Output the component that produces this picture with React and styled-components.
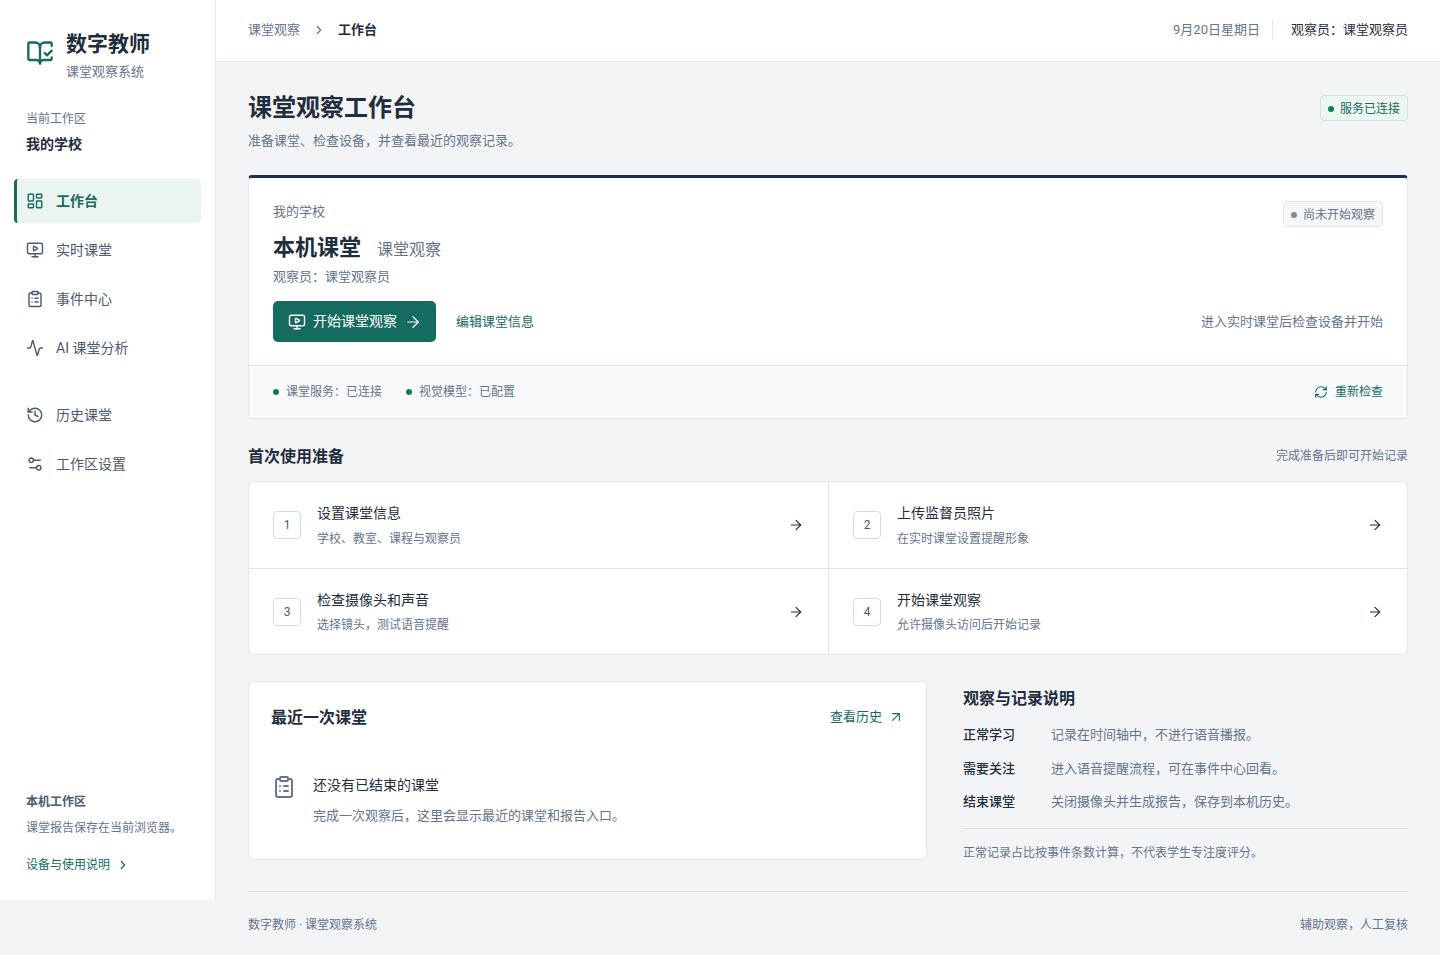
import React from "react";
import styled, { createGlobalStyle } from "styled-components";
import {
  Activity,
  ArrowRight,
  ArrowUpRight,
  BookOpenCheck,
  ChevronRight,
  ClipboardList,
  History,
  LayoutDashboard,
  MonitorPlay,
  RefreshCw,
  Settings2,
} from "lucide-react";

const GlobalStyle = createGlobalStyle`
  * { box-sizing: border-box; }
  body {
    margin: 0;
    background: #f3f4f6;
    color: #1f2d3d;
    font-family: Roboto, "Noto Sans CJK SC", sans-serif;
    line-height: 1.5;
  }
`;

const Shell = styled.div`
  display: flex;
  align-items: flex-start;
  min-height: 955px;
`;

const Sidebar = styled.aside`
  width: 216px;
  height: 900px;
  flex-shrink: 0;
  display: flex;
  flex-direction: column;
  background: #fff;
  border-right: 1px solid #e2e5ea;
`;

const Brand = styled.div`
  display: flex;
  align-items: center;
  gap: 12px;
  padding: 29px 0 0 26px;
  color: #156b5f;
`;

const BrandLogo = styled(BookOpenCheck)`
  margin-top: -5px;
`;

const BrandName = styled.div`
  font-size: 21px;
  line-height: 30px;
  font-weight: 700;
  color: #1f2d3d;
`;

const BrandSub = styled.div`
  font-size: 13px;
  line-height: 18px;
  margin-top: 4px;
  color: #64748b;
`;

const Workspace = styled.div`
  padding: 29px 0 0 26px;
`;

const WorkspaceLabel = styled.div`
  font-size: 12px;
  line-height: 18px;
  color: #64748b;
`;

const WorkspaceName = styled.div`
  font-size: 14px;
  line-height: 20px;
  margin-top: 6px;
  font-weight: 700;
  color: #1f2d3d;
`;

const Nav = styled.nav`
  display: flex;
  flex-direction: column;
  gap: 5px;
  padding: 25px 14px 0;
`;

const NavItem = styled.a`
  display: flex;
  align-items: center;
  gap: 12px;
  height: 44px;
  padding-left: ${(p) => (p.$active ? "9px" : "12px")};
  margin-top: ${(p) => (p.$gapTop ? "18px" : "0")};
  font-size: 14px;
  font-weight: ${(p) => (p.$active ? 600 : 400)};
  color: ${(p) => (p.$active ? "#156b5f" : "#4b5a6e")};
  background: ${(p) => (p.$active ? "#ecf4f2" : "transparent")};
  border-left: ${(p) => (p.$active ? "3px solid #156b5f" : "0")};
  border-radius: 4px;
`;

const SideFoot = styled.div`
  margin-top: auto;
  padding: 0 0 26px 26px;
`;

const SideFootTitle = styled.div`
  font-size: 12px;
  line-height: 18px;
  font-weight: 600;
  color: #4b5a6e;
`;

const SideFootText = styled.div`
  font-size: 12px;
  line-height: 18px;
  margin-top: 8px;
  color: #64748b;
`;

const SideFootLink = styled.a`
  display: flex;
  align-items: center;
  gap: 6px;
  margin-top: 19px;
  font-size: 12px;
  line-height: 18px;
  color: #156b5f;
`;

const Main = styled.div`
  flex: 1;
  min-width: 0;
`;

const TopBar = styled.header`
  height: 62px;
  display: flex;
  align-items: center;
  justify-content: space-between;
  padding: 0 32px 2px;
  background: #fff;
  border-bottom: 1px solid #e2e5ea;
`;

const Crumbs = styled.div`
  display: flex;
  align-items: center;
  gap: 12px;
  font-size: 13px;
  color: #64748b;
  strong {
    font-weight: 600;
    color: #1f2d3d;
  }
`;

const TopMeta = styled.div`
  display: flex;
  align-items: center;
  font-size: 13px;
`;

const TopDate = styled.span`
  color: #64748b;
  padding-right: 12px;
  border-right: 1px solid #e2e5ea;
  line-height: 20px;
`;

const TopUser = styled.span`
  color: #1f2d3d;
  padding-left: 18px;
`;

const Content = styled.main`
  padding: 0 32px;
`;

const PageHead = styled.div`
  display: flex;
  justify-content: space-between;
  align-items: flex-start;
  padding-top: 29px;
`;

const PageTitle = styled.h1`
  margin: 0;
  font-size: 24px;
  line-height: 34px;
  font-weight: 700;
  color: #1f2d3d;
`;

const PageSub = styled.p`
  margin: 6px 0 0;
  font-size: 13px;
  line-height: 20px;
  color: #64748b;
`;

const Badge = styled.span`
  display: inline-flex;
  align-items: center;
  gap: 6px;
  height: 26px;
  padding: 2px 7px 0;
  font-size: 12px;
  border-radius: 4px;
  border: 1px solid ${(p) => (p.$tone === "ok" ? "#d3e6de" : "#e2e5ea")};
  background: ${(p) => (p.$tone === "ok" ? "#eef6f2" : "#f6f7f9")};
  color: ${(p) => (p.$tone === "ok" ? "#156b5f" : "#64748b")};
`;

const ServiceBadge = styled(Badge)`
  margin-top: 4px;
`;

const Dot = styled.i`
  width: 6px;
  height: 6px;
  flex-shrink: 0;
  border-radius: 50%;
  background: ${(p) => (p.$tone === "ok" ? "#14795f" : "#7d8899")};
`;

const HeroCard = styled.section`
  margin-top: 24px;
  background: #fff;
  border: 1px solid #e2e5ea;
  border-top: 3px solid #1f2f46;
  border-radius: 4px;
`;

const HeroBody = styled.div`
  position: relative;
  padding: 24px 24px 23px;
`;

const HeroBadge = styled(Badge)`
  position: absolute;
  top: 23px;
  right: 24px;
`;

const HeroSchool = styled.div`
  font-size: 13px;
  line-height: 20px;
  color: #64748b;
`;

const HeroTitleRow = styled.div`
  display: flex;
  align-items: baseline;
  gap: 16px;
  margin-top: 11px;
`;

const HeroTitle = styled.h2`
  margin: 0;
  font-size: 22px;
  line-height: 30px;
  font-weight: 700;
`;

const HeroSubtitle = styled.span`
  font-size: 16px;
  color: #64748b;
`;

const HeroObserver = styled.div`
  font-size: 13px;
  line-height: 20px;
  margin-top: 4px;
  color: #64748b;
`;

const HeroActions = styled.div`
  display: flex;
  align-items: center;
  margin-top: 14px;
`;

const StartButton = styled.button`
  display: flex;
  align-items: center;
  gap: 7px;
  height: 41px;
  padding: 0 14px 0 15px;
  border: 0;
  border-radius: 5px;
  background: #156b5f;
  color: #fff;
  font: inherit;
  font-size: 14px;
`;

const EditLink = styled.a`
  margin-left: 20px;
  font-size: 13px;
  color: #156b5f;
`;

const HeroHint = styled.span`
  margin-left: auto;
  font-size: 13px;
  color: #64748b;
`;

const StatusBar = styled.div`
  display: flex;
  align-items: center;
  gap: 24px;
  height: 53px;
  padding: 0 24px;
  background: #f9fafc;
  border-top: 1px solid #e2e5ea;
  font-size: 12px;
  color: #64748b;
`;

const StatusItem = styled.span`
  display: flex;
  align-items: center;
  gap: 7px;
`;

const RecheckLink = styled.a`
  display: flex;
  align-items: center;
  gap: 7px;
  margin-left: auto;
  color: #156b5f;
`;

const SectionHead = styled.div`
  display: flex;
  align-items: center;
  justify-content: space-between;
  margin-top: 26px;
`;

const SectionTitle = styled.h3`
  margin: 0;
  font-size: 16px;
  line-height: 24px;
  font-weight: 600;
  color: #1f2d3d;
`;

const SectionNote = styled.span`
  padding-bottom: 2px;
  font-size: 12px;
  color: #64748b;
`;

const StepGrid = styled.div`
  display: grid;
  grid-template-columns: 1fr 1fr;
  margin-top: 12px;
  background: #fff;
  border: 1px solid #e2e5ea;
  border-radius: 6px;
`;

const Step = styled.a`
  display: flex;
  align-items: center;
  gap: 16px;
  height: ${(p) => (p.$row === 0 ? "87px" : "85px")};
  padding: 0 24px;
  border-left: ${(p) => (p.$col === 1 ? "1px solid #e2e5ea" : "0")};
  border-bottom: ${(p) => (p.$row === 0 ? "1px solid #e2e5ea" : "0")};
`;

const StepNum = styled.span`
  display: flex;
  align-items: center;
  justify-content: center;
  width: 28px;
  height: 28px;
  flex-shrink: 0;
  border: 1px solid #d5d9e0;
  border-radius: 4px;
  font-size: 12px;
  color: #4b5a6e;
`;

const StepText = styled.div`
  flex: 1;
`;

const StepTitle = styled.div`
  font-size: 14px;
  line-height: 20px;
  color: #1f2d3d;
`;

const StepDesc = styled.div`
  font-size: 12px;
  line-height: 18px;
  margin-top: ${(p) => (p.$row === 0 ? "7px" : "6px")};
  color: #64748b;
`;

const Lower = styled.div`
  display: grid;
  grid-template-columns: minmax(0, 1fr) 445px;
  gap: 36px;
  margin-top: 26px;
`;

const RecentCard = styled.section`
  height: 179px;
  padding: 24px 22px;
  background: #fff;
  border: 1px solid #e2e5ea;
  border-radius: 6px;
`;

const RecentHead = styled.div`
  display: flex;
  align-items: center;
  justify-content: space-between;
`;

const HistoryLink = styled.a`
  display: flex;
  align-items: center;
  gap: 6px;
  padding-bottom: 2px;
  font-size: 13px;
  color: #156b5f;
`;

const Empty = styled.div`
  display: flex;
  gap: 17px;
  margin: 45px 0 0 1px;
  color: #64748b;
`;

const EmptyTitle = styled.div`
  font-size: 14px;
  line-height: 20px;
  color: #1f2d3d;
`;

const EmptyText = styled.div`
  font-size: 13px;
  line-height: 20px;
  margin-top: 11px;
  color: #64748b;
`;

const Notes = styled.section`
  padding-top: 6px;
`;

const NoteRow = styled.div`
  display: grid;
  grid-template-columns: 88px 1fr;
  margin-top: ${(p) => (p.$first ? "14px" : "13.5px")};
  font-size: 13px;
  line-height: 20px;
  color: #64748b;
  b {
    font-weight: 500;
    color: #1f2d3d;
  }
`;

const NoteFoot = styled.p`
  margin: 16px 0 0;
  padding-top: 14px;
  border-top: 1px solid #e2e5ea;
  font-size: 12px;
  line-height: 20px;
  color: #64748b;
`;

const Footer = styled.footer`
  display: flex;
  justify-content: space-between;
  align-items: center;
  height: 66px;
  margin-top: 28px;
  border-top: 1px solid #e2e5ea;
  font-size: 12px;
  color: #64748b;
`;

const navTop = [
  { label: "工作台", icon: LayoutDashboard, active: true },
  { label: "实时课堂", icon: MonitorPlay },
  { label: "事件中心", icon: ClipboardList },
  { label: "AI 课堂分析", icon: Activity },
];

const navBottom = [
  { label: "历史课堂", icon: History },
  { label: "工作区设置", icon: Settings2 },
];

const steps = [
  { title: "设置课堂信息", desc: "学校、教室、课程与观察员" },
  { title: "上传监督员照片", desc: "在实时课堂设置提醒形象" },
  { title: "检查摄像头和声音", desc: "选择镜头，测试语音提醒" },
  { title: "开始课堂观察", desc: "允许摄像头访问后开始记录" },
];

const notes = [
  { label: "正常学习", text: "记录在时间轴中，不进行语音播报。" },
  { label: "需要关注", text: "进入语音提醒流程，可在事件中心回看。" },
  { label: "结束课堂", text: "关闭摄像头并生成报告，保存到本机历史。" },
];

export default function App() {
  return (
    <>
      <GlobalStyle />
      <Shell>
        <Sidebar>
          <Brand>
            <BrandLogo size={28} strokeWidth={2} />
            <div>
              <BrandName>数字教师</BrandName>
              <BrandSub>课堂观察系统</BrandSub>
            </div>
          </Brand>
          <Workspace>
            <WorkspaceLabel>当前工作区</WorkspaceLabel>
            <WorkspaceName>我的学校</WorkspaceName>
          </Workspace>
          <Nav>
            {navTop.map(({ label, icon: Icon, active }) => (
              <NavItem key={label} $active={active}>
                <Icon size={18} strokeWidth={1.9} />
                {label}
              </NavItem>
            ))}
            {navBottom.map(({ label, icon: Icon }, i) => (
              <NavItem key={label} $gapTop={i === 0}>
                <Icon size={18} strokeWidth={1.9} />
                {label}
              </NavItem>
            ))}
          </Nav>
          <SideFoot>
            <SideFootTitle>本机工作区</SideFootTitle>
            <SideFootText>课堂报告保存在当前浏览器。</SideFootText>
            <SideFootLink>
              设备与使用说明 <ChevronRight size={14} />
            </SideFootLink>
          </SideFoot>
        </Sidebar>
        <Main>
          <TopBar>
            <Crumbs>
              课堂观察
              <ChevronRight size={14} />
              <strong>工作台</strong>
            </Crumbs>
            <TopMeta>
              <TopDate>9月20日星期日</TopDate>
              <TopUser>观察员：课堂观察员</TopUser>
            </TopMeta>
          </TopBar>
          <Content>
            <PageHead>
              <div>
                <PageTitle>课堂观察工作台</PageTitle>
                <PageSub>准备课堂、检查设备，并查看最近的观察记录。</PageSub>
              </div>
              <ServiceBadge $tone="ok">
                <Dot $tone="ok" />
                服务已连接
              </ServiceBadge>
            </PageHead>

            <HeroCard>
              <HeroBody>
                <HeroBadge>
                  <Dot />
                  尚未开始观察
                </HeroBadge>
                <HeroSchool>我的学校</HeroSchool>
                <HeroTitleRow>
                  <HeroTitle>本机课堂</HeroTitle>
                  <HeroSubtitle>课堂观察</HeroSubtitle>
                </HeroTitleRow>
                <HeroObserver>观察员：课堂观察员</HeroObserver>
                <HeroActions>
                  <StartButton>
                    <MonitorPlay size={18} strokeWidth={1.8} />
                    开始课堂观察
                    <ArrowRight size={18} strokeWidth={1.6} />
                  </StartButton>
                  <EditLink>编辑课堂信息</EditLink>
                  <HeroHint>进入实时课堂后检查设备并开始</HeroHint>
                </HeroActions>
              </HeroBody>
              <StatusBar>
                <StatusItem>
                  <Dot $tone="ok" />
                  课堂服务：已连接
                </StatusItem>
                <StatusItem>
                  <Dot $tone="ok" />
                  视觉模型：已配置
                </StatusItem>
                <RecheckLink>
                  <RefreshCw size={14} strokeWidth={1.9} />
                  重新检查
                </RecheckLink>
              </StatusBar>
            </HeroCard>

            <SectionHead>
              <SectionTitle>首次使用准备</SectionTitle>
              <SectionNote>完成准备后即可开始记录</SectionNote>
            </SectionHead>
            <StepGrid>
              {steps.map((s, i) => (
                <Step key={s.title} $col={i % 2} $row={i < 2 ? 0 : 1}>
                  <StepNum>{i + 1}</StepNum>
                  <StepText>
                    <StepTitle>{s.title}</StepTitle>
                    <StepDesc $row={i < 2 ? 0 : 1}>{s.desc}</StepDesc>
                  </StepText>
                  <ArrowRight size={16} strokeWidth={1.7} />
                </Step>
              ))}
            </StepGrid>

            <Lower>
              <RecentCard>
                <RecentHead>
                  <SectionTitle>最近一次课堂</SectionTitle>
                  <HistoryLink>
                    查看历史
                    <ArrowUpRight size={16} strokeWidth={1.7} />
                  </HistoryLink>
                </RecentHead>
                <Empty>
                  <ClipboardList size={24} strokeWidth={1.9} />
                  <div>
                    <EmptyTitle>还没有已结束的课堂</EmptyTitle>
                    <EmptyText>完成一次观察后，这里会显示最近的课堂和报告入口。</EmptyText>
                  </div>
                </Empty>
              </RecentCard>
              <Notes>
                <SectionTitle>观察与记录说明</SectionTitle>
                {notes.map((n, i) => (
                  <NoteRow key={n.label} $first={i === 0}>
                    <b>{n.label}</b>
                    <span>{n.text}</span>
                  </NoteRow>
                ))}
                <NoteFoot>正常记录占比按事件条数计算，不代表学生专注度评分。</NoteFoot>
              </Notes>
            </Lower>

            <Footer>
              <span>数字教师 · 课堂观察系统</span>
              <span>辅助观察，人工复核</span>
            </Footer>
          </Content>
        </Main>
      </Shell>
    </>
  );
}
